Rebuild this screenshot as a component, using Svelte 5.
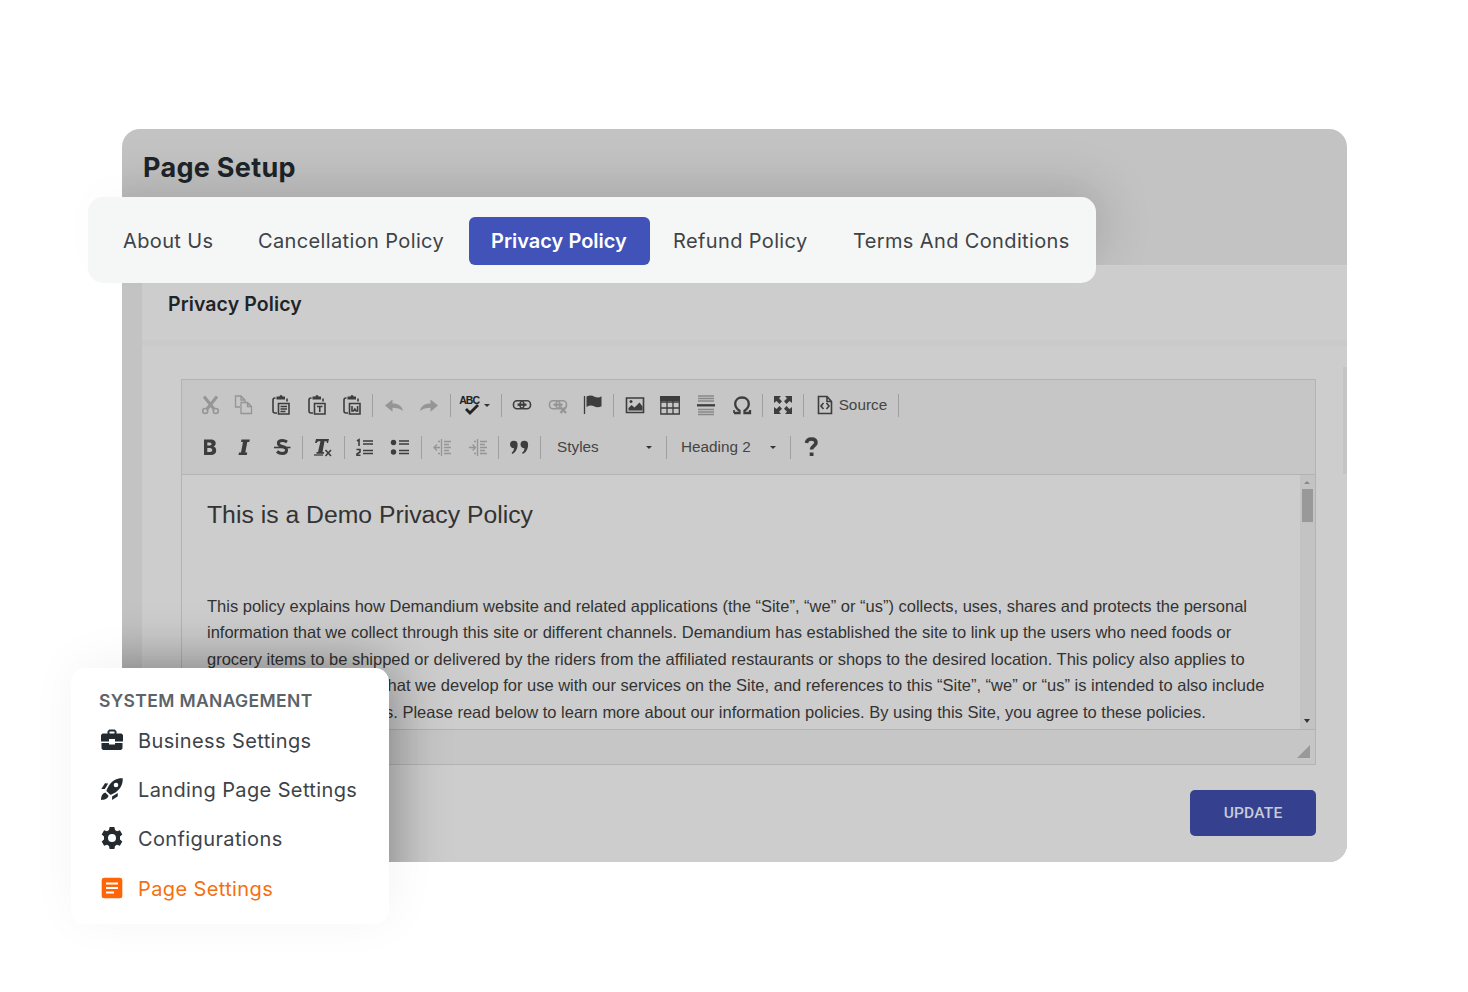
<script lang="ts">
	type Tool = { icon?: string; sep?: boolean; faded?: boolean; label?: string; kind?: string };

	const sep: Tool = { sep: true };

	const tabs = [
		{ label: 'About Us', width: 90, gap: 45 },
		{ label: 'Cancellation Policy', width: 187, gap: 24 },
		{ label: 'Privacy Policy', width: 136, gap: 23, active: true },
		{ label: 'Refund Policy', width: 135, gap: 45 },
		{ label: 'Terms And Conditions', width: 215, gap: 0 }
	];

	const menu = [
		{ label: 'Business Settings', icon: 'briefcase' },
		{ label: 'Landing Page Settings', icon: 'rocket' },
		{ label: 'Configurations', icon: 'gear' },
		{ label: 'Page Settings', icon: 'page', active: true }
	];

	const firstRow: Tool[] = [
		{ icon: 'cut', faded: true },
		{ icon: 'copy', faded: true },
		{ icon: 'paste' },
		{ icon: 'pasteText' },
		{ icon: 'pasteWord' },
		sep,
		{ icon: 'undo', faded: true },
		{ icon: 'redo', faded: true },
		sep,
		{ icon: 'spell', kind: 'checker' },
		sep,
		{ icon: 'link' },
		{ icon: 'unlink', faded: true },
		{ icon: 'flag' },
		sep,
		{ icon: 'image' },
		{ icon: 'table' },
		{ icon: 'rule' },
		{ icon: 'omega' },
		sep,
		{ icon: 'maximize' },
		sep,
		{ icon: 'source', label: 'Source', kind: 'source' },
		sep
	];

	const secondRow: Tool[] = [
		{ icon: 'bold' },
		{ icon: 'italic' },
		{ icon: 'strike' },
		sep,
		{ icon: 'clear' },
		sep,
		{ icon: 'ordered' },
		{ icon: 'bullets' },
		sep,
		{ icon: 'outdent', faded: true },
		{ icon: 'indent', faded: true },
		sep,
		{ icon: 'quote' },
		sep,
		{ label: 'Styles', kind: 'styles' },
		sep,
		{ label: 'Heading 2', kind: 'format' },
		sep,
		{ icon: 'help' }
	];
</script>

{#snippet clipboard()}
	<path d="M6.500 5H6a2 2 0 0 0-2 2v11a2 2 0 0 0 2 2h2M18 5.500v3" class="line" />
	<path d="M7.500 3.500h3q0-1.500 1.500-1.500t1.500 1.500h2.500v3H7.500z" />
	<path d="M9.500 10.500H20V21H9.500z" class="line" />
{/snippet}

{#snippet glyph(name: string)}
	<svg class="glyph" viewBox="0 0 24 24" width="24" height="24">
		{#if name === 'cut'}
			<path d="M6 3.500 16 16M19 3.500 9 16" class="line heavy" />
			<circle cx="7.200" cy="18" r="2.500" class="line" />
			<circle cx="17.800" cy="18" r="2.500" class="line" />
		{:else if name === 'copy'}
			<path d="M7 14H2.500V3H8l4 4v2M8 3v4h4M8 9.500h6.500l4 4V20.500H8zM14.500 9.500v4h4" class="line thin" />
		{:else if name === 'paste'}
			{@render clipboard()}
			<path d="M11.500 13.500H18M11.500 16H18M11.500 18.500h5" class="line thin" />
		{:else if name === 'pasteText'}
			{@render clipboard()}
			<path d="M12 13.500h5.500M14.750 13.500V19" class="line" />
		{:else if name === 'pasteWord'}
			{@render clipboard()}
			<path d="M12 13v5h1.500l1.300-2 1.300 2h1.500v-5" class="line" />
		{:else if name === 'undo'}
			<path d="m3 12.500 7.500-6v4c6 0 9.500 2.500 10.500 7.500-3-2.500-6-3.300-10.500-3.300v4z" />
		{:else if name === 'redo'}
			<path d="m21 12.500-7.500-6v4C7.500 10.500 4 13 3 18c3-2.500 6-3.300 10.500-3.300v4z" />
		{:else if name === 'spell'}
			<path d="m7 16 4 4 8-8" class="line check" />
		{:else if name === 'link' || name === 'unlink'}
			<rect x="3.500" y="7.700" width="10.500" height="8" rx="3.500" class="line" />
			<rect x="10" y="7.700" width="10.500" height="8" rx="3.500" class="line" />
			<path d="M7.500 11.700h9" class="line wide" />
			{#if name === 'unlink'}
				<path d="m14.500 14 5.500 6m0-6-5.500 6" class="line wide" />
			{/if}
		{:else if name === 'flag'}
			<path d="M3.500 3v18" class="line thin" />
			<path d="M5.500 3.500q4.500-2 8 .3 4 1.700 7-.5v10q-4 2-7.500 0-3.500-1.800-7.500.7z" />
		{:else if name === 'image'}
			<path d="M3.500 5h17v14.500h-17z" class="line" />
			<path d="M5.500 17.500V15l3-3 3 2.500 5-5 3 4v4z" />
			<circle cx="8" cy="8.500" r="1.500" />
		{:else if name === 'table'}
			<path d="M2.800 4h18.500v17H2.800zM3 9h18M3 15h18M9 8v13M15 8v13" class="line thin" />
			<path d="M2 3h20v5H2z" />
		{:else if name === 'rule'}
			<path d="M4 3h16M4 5.500h16M4 8h16M4 16.500h16M4 19h16M4 21.500h16" class="line pale" />
			<path d="M3 12.300h18" class="line wide" />
		{:else if name === 'omega'}
			<path
				d="M4 20h5.500v-2.300C6.800 16 5.200 14 5.200 10.800 5.200 7 8 4.500 12 4.500s6.800 2.500 6.800 6.300c0 3.200-1.600 5.200-4.300 6.900V20H20v-3"
				class="line wide"
			/>
			<path d="M4 20v-3" class="line" />
		{:else if name === 'maximize'}
			<path d="M3 3h7L8 5.300l3 3L8.500 11l-3-3L3 10zM21 3v7l-2.500-2-3 3L13 8.300l3-3L14 3zM3 21v-7l2.500 2 3-3 2.500 2.700-3 3 2 2.300zM21 21h-7l2-2.300-3-3 2.500-2.700 3 3L21 14z" />
		{:else if name === 'source'}
			<path d="M5.500 3.500H14l4.500 5V20.500h-13zM14 4v4.500h4" class="line" />
			<path d="m10.500 10-2.500 3 2.500 3m3-6 2.500 3-2.500 3" class="line" />
		{:else if name === 'bold'}
			<path
				fill-rule="evenodd"
				d="M6 4.500h6.500c4 0 5.200 2 5.200 3.800 0 1.700-.9 2.800-2.200 3.300 1.700.4 2.700 1.700 2.700 3.800 0 2.800-2 4.600-5.200 4.600H6zM9.300 7.400v3h2.200c2.800 0 2.800-3 0-3zm0 5.600v4h2.700c3 0 3-4 0-4z"
			/>
		{:else if name === 'italic'}
			<path d="M7.500 4.500h8.300l-.5 2.500h-2l-2 10.500h2l-.5 2.500H4.500l.5-2.500h2L9 7H7z" />
		{:else if name === 'strike'}
			<path d="M17 7q-2-1.500-4.700-1.500c-5.500 0-5 5 0 6 6 1.200 5.300 7 0 7q-3 0-5.300-2" class="line heavy" />
			<path d="M4 12.500h16.500" class="line" />
		{:else if name === 'clear'}
			<path d="M5 4h13l-1 4h-1l-.5-1.800h-2L11.500 17H13v1.700H5.500V17H7L9.500 6.200H7L5.500 8H4z" />
			<path d="M3 20h9" class="line thin" />
			<path d="m14.500 15 5.500 6m0-6-5.500 6" class="line" />
		{:else if name === 'ordered'}
			<path d="M4 6l2-1.300V11M3.500 14.500H7V17l-3 2v1.300h3.500" class="line" />
			<path d="M10 6h10M10 9h10M10 15.500h10M10 18.500h10" class="line" />
		{:else if name === 'bullets'}
			<circle cx="5.500" cy="7.500" r="2.700" />
			<circle cx="5.500" cy="17" r="2.700" />
			<path d="M11 6h10M11 9h10M11 15.500h10M11 18.500h10" class="line" />
		{:else if name === 'outdent' || name === 'indent'}
			<path
				d="M11.500 4v17M14 6.500h7M14 9.500h5M14 12.500h7M14 15.500h5M14 18.500h7M8 6.500h2M8 18.500h2"
				class="line thin"
			/>
			<path d={name === 'outdent' ? 'M10 12.500H4m3-3-3 3 3 3' : 'M3 12.500h6.500m-3-3 3 3-3 3'} class="line thin" />
		{:else if name === 'quote'}
			<path d="M3 9.500a3.800 3.800 0 1 1 7.600.3c0 4.200-2 7.700-5.300 9.200l-.7-1.300c1.600-1.300 2.400-2.700 2.400-4.500A3.800 3.800 0 0 1 3 9.500zM13.500 9.500a3.800 3.800 0 1 1 7.600.3c0 4.200-2 7.700-5.300 9.200l-.7-1.300c1.600-1.300 2.400-2.700 2.400-4.500a3.800 3.800 0 0 1-4-3.700z" />
		{:else if name === 'help'}
			<path d="M7.500 8q.5-4 5-4t4.500 3.700c0 3-4.500 3.300-4.500 6.800" class="line help" />
			<path d="M10.700 17.500h3.800V21h-3.800z" />
		{/if}
	</svg>
{/snippet}

{#snippet tool(item: Tool)}
	{#if item.sep}
		<span class="sep"></span>
	{:else}
		<span class="tool {item.kind ?? ''}" class:faded={item.faded}>
			{#if item.icon}{@render glyph(item.icon)}{/if}
			{#if item.icon === 'spell'}<span class="abc">ABC</span>{/if}
			{#if item.label}<span class="label">{item.label}</span>{/if}
			{#if item.kind && item.kind !== 'source'}<i class="caret"></i>{/if}
		</span>
	{/if}
{/snippet}

<main>
	<section class="panel">
		<header><h1>Page Setup</h1></header>
		<div class="card">
			<h2>Privacy Policy</h2>
			<div class="card-body">
				<div class="editor">
					<div class="toolbar">
						<div class="row">
							{#each firstRow as item}{@render tool(item)}{/each}
						</div>
						<div class="row second">
							{#each secondRow as item}{@render tool(item)}{/each}
						</div>
					</div>
					<div class="content">
						<article>
							<h3>This is a Demo Privacy Policy</h3>
							<p>This policy explains how Demandium website and related applications (the “Site”, “we” or “us”) collects, uses, shares and protects the personal</p>
							<p>information that we collect through this site or different channels. Demandium has established the site to link up the users who need foods or</p>
							<p>grocery items to be shipped or delivered by the riders from the affiliated restaurants or shops to the desired location. This policy also applies to</p>
							<p class="l4">that we develop for use with our services on the Site, and references to this “Site”, “we” or “us” is intended to also include</p>
							<p class="l5">s. Please read below to learn more about our information policies. By using this Site, you agree to these policies.</p>
						</article>
						<div class="scrollbar">
							<i class="up"></i>
							<i class="thumb"></i>
							<i class="down"></i>
						</div>
					</div>
					<div class="status"><i class="grip"></i></div>
				</div>
				<button>UPDATE</button>
			</div>
		</div>
		<i class="edge"></i>
		<i class="shade top"></i>
		<i class="shade side"></i>
	</section>

	<nav class="tabs">
		{#each tabs as tab}
			<span class="tab" class:active={tab.active} style:margin-right="{tab.gap}px">
				<span class="tab-text" style:width="{tab.width}px">{tab.label}</span>
			</span>
		{/each}
	</nav>

	<aside>
		<h4>SYSTEM MANAGEMENT</h4>
		{#each menu as item}
			<div class="item" class:active={item.active}>
				<svg viewBox="0 0 24 24" width="24" height="24">
					{#if item.icon === 'briefcase'}
						<path d="M7.500 5.500V3.300L9.300 1.500h5.400l1.800 1.800v2.200h5L23 7v6.500h-8V11H9v2.500H1V7l1.500-1.500zm2 0h5V3.500h-5zM1.500 15H9v1.500h6V15h7.500v5.500L21 22H3l-1.500-1.500z" fill-rule="evenodd" />
					{:else if item.icon === 'rocket'}
						<path fill-rule="evenodd" d="M22.700 1.300C17 1 12.500 3.500 9 8.500c-1.300 2-2.300 4-2.600 5.500l3.900 3.800c1.600-.4 3.700-1.400 5.500-2.600 5-3.500 7.200-8 6.900-13.900zM16 5.700a2.300 2.300 0 1 1 0 4.600 2.300 2.300 0 0 1 0-4.600z" />
						<path d="M8.200 6.500 5 6.300 1.300 12h3.500zM17.700 16l.1 3.300-5.700 3.600v-3.500zM5.300 15.500l3.300 3.300C7.500 22 4.500 22.800 1 23c.2-3.500 1-6.500 4.300-7.500z" />
					{:else if item.icon === 'gear'}
						<path fill-rule="evenodd" d="m9.600 1-.6 3-2 1.200-2.900-1L1.700 8.500 4 10.600v2.800l-2.300 2.100 2.400 4.300 2.900-1L9 20l.6 3h4.800l.6-3 2-1.200 2.900 1 2.400-4.300-2.300-2.100v-2.800l2.300-2.100-2.400-4.300-2.900 1L15 4l-.6-3zM12 8a4 4 0 1 1 0 8 4 4 0 0 1 0-8z" />
					{:else}
						<rect x="1.700" y="1.700" width="20.600" height="20.600" rx="2.500" />
						<path d="M6 7.500h12M6 12h12M6 16.500h8" class="page-lines" />
					{/if}
				</svg>
				<span>{item.label}</span>
			</div>
		{/each}
	</aside>
</main>

<style>
	:global(body) {
		margin: 0;
		background: #fff;
	}

	main {
		position: relative;
		box-sizing: border-box;
		width: 1468px;
		height: 992px;
		padding: 129px 121px 0 122px;
		overflow: hidden;
		font-family: Inter, sans-serif;
		color: #1e2529;
	}

	h1,
	h2,
	h3,
	h4,
	p {
		margin: 0;
		white-space: nowrap;
	}

	.panel {
		position: relative;
		display: flex;
		flex-direction: column;
		height: 733px;
		border-radius: 18px;
		background: #c3c3c3;
		overflow: hidden;
	}

	header {
		height: 136px;
		padding-left: 21px;
	}

	h1 {
		font-size: 27px;
		font-weight: 700;
		line-height: 77px;
		letter-spacing: 0.300px;
	}

	.card {
		flex: 1;
		margin-left: 20px;
		border-top: 1px solid #cfcfcf;
		background: #cdcdcd;
	}

	h2 {
		height: 80px;
		box-sizing: border-box;
		padding-left: 26px;
		border-bottom: 6px solid #cacaca;
		font-size: 19.500px;
		font-weight: 600;
		line-height: 76px;
		letter-spacing: 0.100px;
	}

	.card-body {
		display: flex;
		flex-direction: column;
		padding: 33px 31px 0 39px;
	}

	.editor {
		box-sizing: border-box;
		height: 386px;
		border: 1px solid #b3b3b3;
		font-family: 'Liberation Sans', Arial, sans-serif;
		color: #333;
	}

	.toolbar {
		box-sizing: border-box;
		height: 95px;
		padding: 4px 0 0 10px;
		background: #c6c6c6;
		border-bottom: 1px solid #b3b3b3;
	}

	.row {
		display: flex;
		align-items: center;
		height: 42px;
	}

	.second {
		padding-left: 0.700px;
	}

	.tool {
		display: flex;
		align-items: center;
		justify-content: center;
		width: 35.600px;
		flex: none;
		font-size: 15.300px;
		color: #444;
	}

	.sep {
		width: 1px;
		height: 23px;
		margin: 0 2.500px;
		background: #a0a0a0;
	}

	.faded {
		opacity: 0.35;
	}

	.glyph {
		flex: none;
		margin-top: -1px;
		fill: #3d3d3d;
	}

	.line {
		fill: none;
		stroke: #3d3d3d;
		stroke-width: 1.600;
	}
	.thin {
		stroke-width: 1.300;
	}
	.wide {
		stroke-width: 2.300;
	}
	.heavy {
		stroke-width: 3;
	}
	.help {
		stroke-width: 3.600;
	}
	.pale {
		stroke: #888;
		stroke-width: 1.400;
	}
	.check {
		stroke: #222;
		stroke-width: 2.800;
	}

	.caret {
		width: 0;
		border: 3px solid transparent;
		border-top: 3.500px solid #333;
		border-bottom: 0;
	}

	.label {
		margin-top: -1px;
	}

	.checker {
		position: relative;
		width: 45px;
	}
	.checker .caret {
		margin: 0 3px 0 1px;
	}

	/* sits over the check mark */
	.abc {
		position: absolute;
		top: -1px;
		left: 6px;
		font: bold 10.500px/14px 'Liberation Sans', sans-serif;
		letter-spacing: -0.900px;
		color: #222;
	}

	.source {
		box-sizing: border-box;
		width: 89px;
		padding-right: 3px;
	}
	.source .label {
		margin-left: 2px;
	}
	.styles,
	.format {
		box-sizing: border-box;
		width: 120px;
		padding: 0 11px 0 14px;
		justify-content: space-between;
	}
	.format {
		width: 118px;
		padding: 0 11px 0 12px;
	}

	.content {
		display: flex;
		height: 254px;
		overflow: hidden;
	}

	article {
		flex: 1;
		min-width: 0;
		padding: 22px 0 0 25px;
	}

	h3 {
		height: 95.500px;
		font-size: 24.750px;
		font-weight: 400;
		line-height: 35px;
	}

	p {
		width: max-content;
		font-size: 16.510px;
		line-height: 26.500px;
	}

	.l4 {
		margin-left: 176px;
	}
	.l5 {
		margin-left: 178px;
	}

	.scrollbar {
		display: flex;
		flex-direction: column;
		align-items: center;
		box-sizing: border-box;
		width: 15px;
		padding: 6px 1px 6px 0;
		background: #c3c3c3;
	}

	.up {
		border: 3px solid transparent;
		border-top: 0;
		border-bottom: 3px solid #888;
	}

	.thumb {
		width: 11px;
		height: 33px;
		margin-top: 5px;
		background: #999;
	}

	.down {
		margin-top: auto;
		border: 3px solid transparent;
		border-top: 4px solid #333;
		border-bottom: 0;
	}

	.status {
		display: flex;
		justify-content: flex-end;
		align-items: flex-end;
		box-sizing: border-box;
		height: 35px;
		padding: 0 5px 6px;
		border-top: 1px solid #b3b3b3;
		background: #c6c6c6;
	}

	.grip {
		border-left: 13px solid transparent;
		border-bottom: 13px solid #999;
	}

	button {
		align-self: flex-end;
		width: 126px;
		height: 46px;
		margin-top: 25px;
		border: 0;
		border-radius: 5px;
		background: #35418f;
		color: #c9cbd8;
		font: 500 15.500px Roboto, sans-serif;
		letter-spacing: 0.200px;
	}

	.edge {
		position: absolute;
		right: 0;
		top: 238px;
		width: 4px;
		height: 107px;
		background: #c4c4c4;
	}

	/* shadows of the floating cards, clipped to the panel */
	.shade {
		position: absolute;
		border-radius: 15px;
	}
	.top {
		top: 68px;
		left: -34px;
		width: 1008px;
		height: 76px;
		box-shadow: 8px -12px 50px rgb(0 0 0 / 0.13);
		clip-path: inset(-80px -100px 8px -10px);
	}
	.side {
		top: 539px;
		left: -50px;
		width: 316px;
		height: 256px;
		box-shadow: 0 0 60px rgb(0 0 0 / 0.38);
	}

	.tabs {
		position: absolute;
		top: 197px;
		left: 88px;
		display: flex;
		align-items: center;
		box-sizing: border-box;
		width: 1008px;
		height: 86px;
		padding: 1px 0 0 35px;
		border-radius: 15px;
		background: #f5f6f6;
		font-size: 20px;
		letter-spacing: 0.370px;
		color: #3e4347;
		box-shadow: 0 -10px 40px rgb(0 0 0 / 0.015);
	}

	.tab {
		flex: none;
		line-height: 48px;
		white-space: nowrap;
	}

	.tab-text {
		display: block;
	}

	.tab.active {
		padding: 0 23px 0 22px;
		border-radius: 6px;
		background: #4152b8;
		color: #fff;
		font-weight: 600;
		letter-spacing: 0;
	}

	aside {
		position: absolute;
		top: 668px;
		left: 71px;
		box-sizing: border-box;
		width: 318px;
		height: 256px;
		padding: 20px 0 0 29px;
		border-radius: 14px;
		background: #fff;
		box-shadow: 4px -6px 50px rgb(0 0 0 / 0.05);
	}

	h4 {
		height: 29px;
		margin-left: -1px;
		font-size: 17.500px;
		font-weight: 600;
		line-height: 26px;
		letter-spacing: 0.360px;
		color: #5c6369;
	}

	.item {
		display: flex;
		align-items: center;
		gap: 14px;
		height: 49.200px;
		font-size: 20px;
		line-height: 49px;
		letter-spacing: 0.380px;
		color: #3e4347;
		white-space: nowrap;
	}

	.item svg {
		width: 24px;
		margin-top: -3px;
		fill: #232b30;
	}

	.item.active {
		color: #f5700f;
	}
	.item.active svg {
		fill: #ff6406;
	}

	.page-lines {
		stroke: #fff;
		stroke-width: 2;
	}
</style>
